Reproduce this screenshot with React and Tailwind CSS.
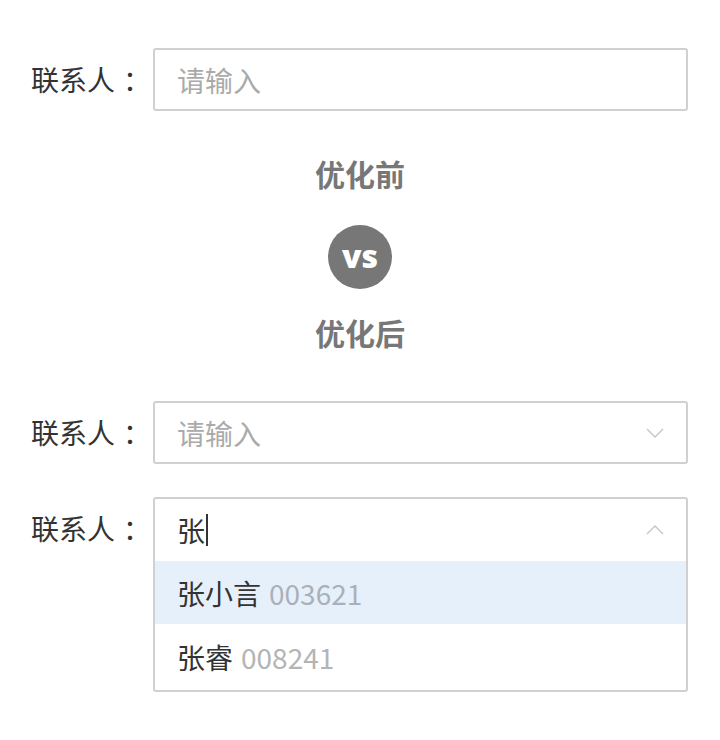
const font = { fontFamily: '"Noto Sans CJK SC", "Noto Sans", sans-serif' };

function Chevron({ up }) {
  return (
    <svg width="18" height="10" viewBox="0 0 18 10" className="mr-[22px]">
      <path
        d={up ? "M1 9 L9 1 L17 9" : "M1 1 L9 9 L17 1"}
        fill="none"
        stroke="#c8c8c8"
        strokeWidth="1.5"
      />
    </svg>
  );
}

function Label() {
  return (
    <div className="w-[153px] shrink-0 pl-[31px] whitespace-nowrap text-[28px] text-[#333] leading-[62px]">
      联系人<span className="ml-[8px]">：</span>
    </div>
  );
}

export default function App() {
  return (
    <div className="w-[720px] h-[740px] bg-white pt-[48px]" style={font}>
      <div className="flex pr-[32px]">
        <Label />
        <div className="flex-1 h-[63px] border-2 border-[#d0d0d0] rounded-[3px] flex items-center px-[22px] text-[28px] text-[#aaa]">
          请输入
        </div>
      </div>

      <div className="flex flex-col items-center mt-[42px]">
        <div className="text-[30px] font-bold text-[#777] leading-[40px]">优化前</div>
        <div className="mt-[32px] w-[64px] h-[64px] rounded-full bg-[#777] flex items-center justify-center text-white font-black text-[32px] leading-none pb-[3px]" style={{ fontFamily: '"Open Sans", sans-serif' }}>
          vs
        </div>
        <div className="mt-[23px] text-[30px] font-bold text-[#777] leading-[40px]">优化后</div>
      </div>

      <div className="flex pr-[32px] mt-[49px]">
        <Label />
        <div className="flex-1 h-[63px] border-2 border-[#d0d0d0] rounded-[3px] flex items-center justify-between pl-[22px] text-[28px] text-[#aaa]">
          <span>请输入</span>
          <Chevron />
        </div>
      </div>

      <div className="flex pr-[32px] mt-[33px]">
        <Label />
        <div className="flex-1 border-2 border-[#d0d0d0] rounded-[3px] text-[28px]">
          <div className="h-[62px] flex items-center justify-between pl-[22px] text-[#333]">
            <span className="flex items-center">
              张<span className="inline-block w-[2px] h-[32px] bg-[#333] ml-[1px]" />
            </span>
            <Chevron up />
          </div>
          <div className="h-[63px] flex items-center pl-[22px] bg-[#e6f0fb] text-[#333]">
            张小言<span className="ml-[8px] text-[#aab0b8]">003621</span>
          </div>
          <div className="h-[66px] flex items-center pl-[22px] text-[#333]">
            张睿<span className="ml-[8px] text-[#b4b4b4]">008241</span>
          </div>
        </div>
      </div>
    </div>
  );
}
